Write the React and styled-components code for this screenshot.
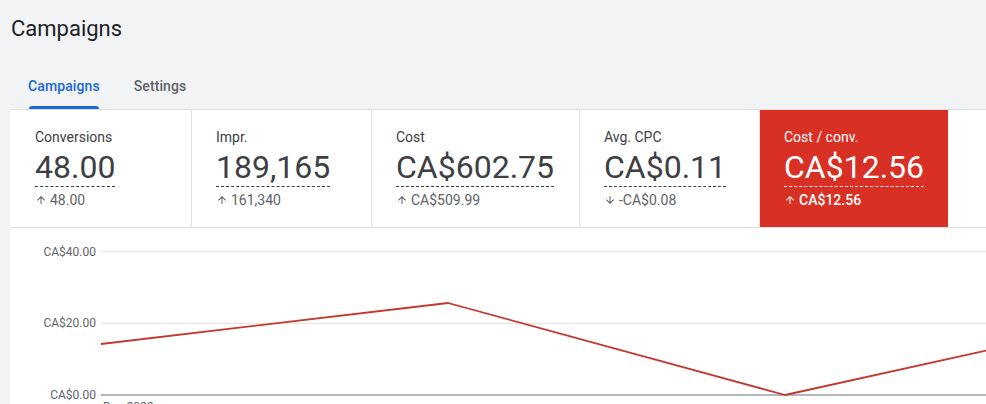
import React from "react";
import styled, { createGlobalStyle } from "styled-components";

const Global = createGlobalStyle`
  html, body {
    margin: 0;
    padding: 0;
    background: #f1f3f4;
    width: 986px;
    height: 404px;
    overflow: hidden;
    font-family: Roboto, "Liberation Sans", Arial, sans-serif;
    -webkit-font-smoothing: antialiased;
  }
`;

const Page = styled.div`
  width: 986px;
  height: 404px;
  display: flex;
  flex-direction: column;
  overflow: hidden;
`;

const Title = styled.h1`
  flex-shrink: 0;
  margin: 15px 0 0 11px;
  font-size: 22px;
  line-height: 28px;
  font-weight: 400;
  color: #202124;
  letter-spacing: 0;
`;

const Tabs = styled.nav`
  flex-shrink: 0;
  display: flex;
  margin: 17px 0 0 11px;
  height: 49px;
`;

const Tab = styled.div`
  position: relative;
  display: flex;
  align-items: center;
  padding: 2px 17px 0;
  font-size: 14px;
  font-weight: 500;
  letter-spacing: 0.1px;
  color: ${(p) => (p.$active ? "#1967d2" : "#5f6368")};
  &::after {
    content: "";
    display: ${(p) => (p.$active ? "block" : "none")};
    position: absolute;
    left: 18px;
    right: 18px;
    bottom: 0;
    height: 3px;
    border-radius: 3px 3px 0 0;
    background: #1967d2;
  }
`;

const Card = styled.section`
  margin-left: 10px;
  flex: 1 1 auto;
  min-height: 0;
  background: #fff;
  border-top: 1px solid #dadce0;
  display: flex;
  flex-direction: column;
`;

const Scorecards = styled.div`
  flex-shrink: 0;
  display: flex;
  height: 117px;
  padding-left: 1px;
  border-bottom: 1px solid #dadce0;
`;

const Metric = styled.div`
  box-sizing: border-box;
  width: ${(p) => p.$w}px;
  padding: 17px 0 0 24px;
  background: ${(p) => (p.$selected ? "#d93025" : "#fff")};
  border-right: ${(p) => (p.$selected ? "none" : "1px solid #e0e0e0")};
  color: ${(p) => (p.$selected ? "#fff" : "#3c4043")};
  display: flex;
  flex-direction: column;
  align-items: flex-start;
`;

const Label = styled.div`
  font-size: 14px;
  line-height: 20px;
`;

const Value = styled.div`
  margin-top: 1px;
  font-size: 32px;
  line-height: 38px;
  border-bottom: 1px dashed
    ${(p) => (p.$selected ? "rgba(255,255,255,0.9)" : "#3c4043")};
`;

const Delta = styled.div`
  margin-top: 4px;
  display: flex;
  align-items: center;
  font-size: 14px;
  line-height: 18px;
  font-weight: ${(p) => (p.$selected ? 500 : 400)};
  color: ${(p) => (p.$selected ? "#fff" : "#5f6368")};
  svg {
    margin-right: 3px;
  }
`;

const ChartArea = styled.div`
  flex: 1 1 auto;
  min-height: 0;
  overflow: hidden;
`;

const Arrow = ({ down }) => (
  <svg
    width="12"
    height="12"
    viewBox="0 0 24 24"
    style={down ? { transform: "rotate(180deg)" } : undefined}
  >
    <path
      fill="currentColor"
      d="M4 12l1.41 1.41L11 7.83V20h2V7.83l5.58 5.59L20 12l-8-8-8 8z"
    />
  </svg>
);

const metrics = [
  { label: "Conversions", value: "48.00", delta: "48.00", w: 181 },
  { label: "Impr.", value: "189,165", delta: "161,340", w: 180 },
  { label: "Cost", value: "CA$602.75", delta: "CA$509.99", w: 208 },
  { label: "Avg. CPC", value: "CA$0.11", delta: "-CA$0.08", w: 180, down: true },
  { label: "Cost / conv.", value: "CA$12.56", delta: "CA$12.56", w: 188, selected: true },
];

const grid = [
  { y: 23.7, label: "CA$40.00" },
  { y: 95.3, label: "CA$20.00" },
];

const Chart = () => (
  <svg width="976" height="180" style={{ display: "block" }}>
    {grid.map((g) => (
      <g key={g.label}>
        <line x1="91" x2="976" y1={g.y} y2={g.y} stroke="#e0e0e0" strokeWidth="1" />
        <text
          x="86"
          y={g.y + 4}
          textAnchor="end"
          fontSize="12"
          fill="#5f6368"
          fontFamily="Roboto, 'Liberation Sans', sans-serif"
        >
          {g.label}
        </text>
      </g>
    ))}
    <line x1="91" x2="976" y1="167" y2="167" stroke="#9aa0a6" strokeWidth="1.5" />
    <text
      x="86"
      y="171"
      textAnchor="end"
      fontSize="12"
      fill="#5f6368"
      fontFamily="Roboto, 'Liberation Sans', sans-serif"
    >
      CA$0.00
    </text>
    <polyline
      points="91,116 438,75 775,167 976,122.7"
      fill="none"
      stroke="#c5372c"
      strokeWidth="1.8"
      strokeLinejoin="round"
    />
    <text
      x="93"
      y="183"
      fontSize="12"
      fill="#5f6368"
      fontFamily="Roboto, 'Liberation Sans', sans-serif"
    >
      Dec 2022
    </text>
  </svg>
);

export default function App() {
  return (
    <Page>
      <Global />
      <Title>Campaigns</Title>
      <Tabs>
        <Tab $active>Campaigns</Tab>
        <Tab>Settings</Tab>
      </Tabs>
      <Card>
        <Scorecards>
          {metrics.map((m) => (
            <Metric key={m.label} $w={m.w} $selected={m.selected}>
              <Label>{m.label}</Label>
              <Value $selected={m.selected}>{m.value}</Value>
              <Delta $selected={m.selected}>
                <Arrow down={m.down} />
                {m.delta}
              </Delta>
            </Metric>
          ))}
        </Scorecards>
        <ChartArea>
          <Chart />
        </ChartArea>
      </Card>
    </Page>
  );
}
